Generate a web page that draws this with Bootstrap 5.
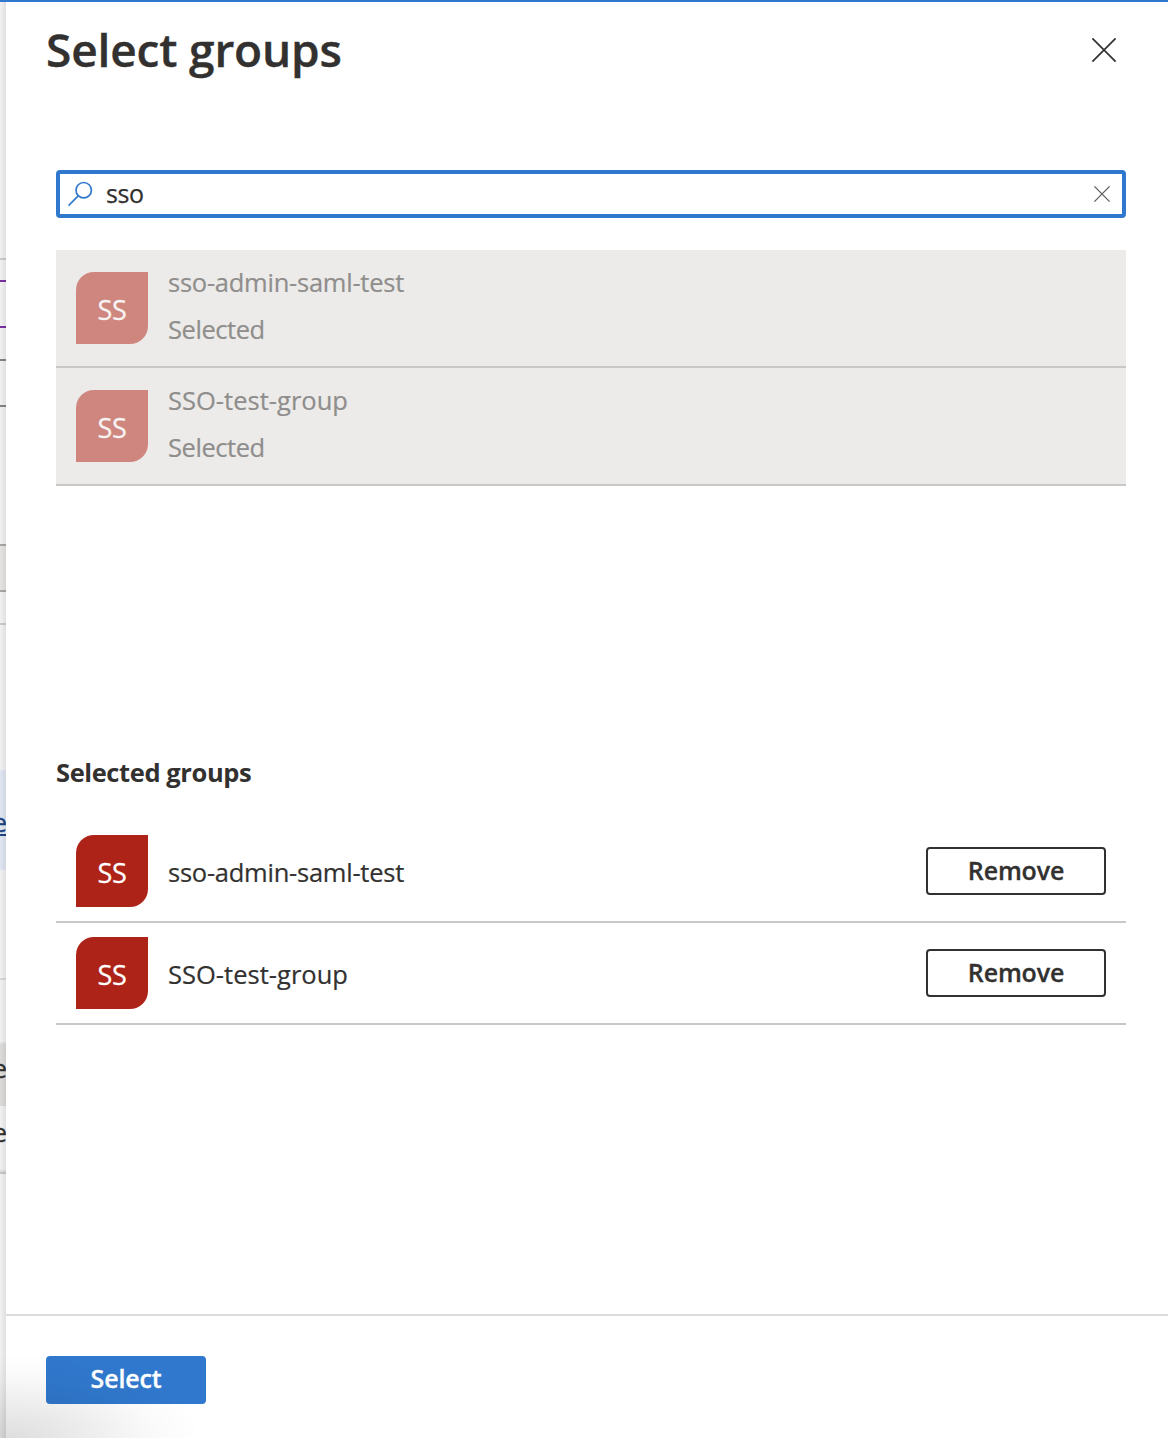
<!DOCTYPE html>
<html lang="en">
<head>
<meta charset="utf-8">
<meta name="viewport" content="width=device-width, initial-scale=1">
<title>Select groups</title>
<link href="https://cdn.jsdelivr.net/npm/bootstrap@5.3.0/dist/css/bootstrap.min.css" rel="stylesheet">
<style>
:root{--azure:#3078cd;--ink:#323130}
body{font-family:"Open Sans","Noto Sans",sans-serif;font-size:26px;line-height:36px;color:var(--ink);background:#fff}
.screen{height:1438px;border-top:2px solid var(--azure)}
.behind{width:6px;background:#f1f1f1;font-size:26px}
.behind>div{flex:none;display:flex;justify-content:flex-end;width:6px;overflow:hidden}
.behind span{flex:none;margin-right:-1px;-webkit-text-stroke:.3px}
.shade{left:0;top:0;width:6px;height:100%;background:linear-gradient(90deg,rgba(0,0,0,0),rgba(0,0,0,.07))}
.blade{min-width:0}
.blade-head{height:168px;padding:23px 50px 0 40px}
.blade-title{font-size:46px;line-height:48px;font-weight:600;letter-spacing:-.15px;-webkit-text-stroke:.4px}
.blade-body{padding:0 42px 0 50px;height:1144px}
.search-box{height:48px;border:4px solid var(--azure);border-radius:4px;padding:0 11px 0 8px}
.search-box input{font-size:25px;letter-spacing:-.4px;-webkit-text-stroke:.25px;color:var(--ink);padding:0 0 2px 13px;height:40px;line-height:38px}
.search-box input:focus{box-shadow:none}
.found{margin-top:32px;height:236px}
.found-row{height:118px;background:#ecebe9;border-bottom:2px solid #c8c8c8;padding:9px 20px 0;color:#8f8e8c}
.found-text{line-height:47px}
.tile{width:72px;height:72px;border-radius:18px 0 18px 0;background:#ae2318;color:#fff;font-size:27px;padding-top:4px;letter-spacing:-.3px;-webkit-text-stroke:.3px}
.found .tile{background:#cf867e;color:#f6f3f2;margin-top:13px}
.label-text{margin-left:20px;font-size:25.5px;letter-spacing:-.25px;-webkit-text-stroke:.2px}
.name-caps{letter-spacing:.02px}
.name-status{letter-spacing:-.45px}
.picked-title{margin-top:268px;font-size:25.5px;line-height:36px;font-weight:700;letter-spacing:-.4px}
.picked{margin-top:31px}
.picked-row{height:102px;border-bottom:2px solid #c8c8c8;padding:0 20px}
.picked .label-text{padding-top:2px}
.btn-remove{width:180px;height:48px;border:2px solid var(--ink);border-radius:4px;font-size:25px;font-weight:600;line-height:38px;padding:0 0 3px;color:var(--ink);background:#fff;-webkit-text-stroke:.3px;letter-spacing:-.15px}
.blade-foot{border-top:2px solid #dcdcdc;height:124px;padding:40px}
.btn-select{width:160px;height:48px;border:0;border-radius:4px;background:var(--azure);color:#fff;font-size:25px;font-weight:600;line-height:43px;padding:0 0 4px;-webkit-text-stroke:.3px;letter-spacing:-.15px}
.glow{left:0;bottom:0;width:220px;height:90px;pointer-events:none;background:radial-gradient(ellipse 190px 84px at 12px 100%,rgba(0,0,0,.13),rgba(0,0,0,.08) 35%,rgba(0,0,0,.02) 75%,rgba(0,0,0,0))}
</style>
</head>
<body class="overflow-hidden">
<div class="screen d-flex position-relative">
  <aside class="behind d-flex flex-column flex-shrink-0 overflow-hidden position-relative">
    <div style="height:256px"></div>
    <div style="height:2px;background:#cbcbcb"></div>
    <div style="height:20px"></div>
    <div style="height:2px;background:#7c30a0"></div>
    <div style="height:44px"></div>
    <div style="height:2px;background:#7c30a0"></div>
    <div style="height:31px"></div>
    <div style="height:2px;background:#838383"></div>
    <div style="height:44px"></div>
    <div style="height:2px;background:#838383"></div>
    <div style="height:137px"></div>
    <div style="height:2px;background:#a8a7a5"></div>
    <div style="height:44px;background:#e5e4e2"></div>
    <div style="height:2px;background:#a8a7a5"></div>
    <div style="height:31px"></div>
    <div style="height:2px;background:#cbcbcb"></div>
    <div style="height:145px"></div>
    <div style="height:100px;background:#e0e6f1;color:#1b4482;padding-top:34px"><span class="text-decoration-underline">e</span></div>
    <div style="height:108px"></div>
    <div style="height:2px;background:#d8d8d8"></div>
    <div style="height:62px"></div>
    <div style="height:2px;background:#e4e4e4"></div>
    <div style="height:62px;background:#dcdbd9;padding-top:6px"><span>e</span></div>
    <div style="height:64px;padding-top:8px"><span>e</span></div>
    <div style="height:2px;background:#e0e0e0"></div>
    <div style="height:2px;background:#c6c6c6"></div>
    <i class="shade position-absolute"></i>
  </aside>
  <main class="blade flex-grow-1 d-flex flex-column bg-white">
    <header class="blade-head d-flex justify-content-between">
      <h1 class="blade-title mb-0">Select groups</h1>
      <button type="button" class="btn p-0 border-0 d-flex align-self-start mt-2" aria-label="Close">
        <svg width="28" height="34" viewBox="0 0 28 34" fill="none" stroke="#323130" stroke-width="1.7"><path d="M2.4 5.4 25.6 28.6M25.6 5.4 2.4 28.6"/></svg>
      </button>
    </header>
    <section class="blade-body">
      <div class="search-box d-flex align-items-center">
        <svg class="flex-shrink-0" width="25" height="26" viewBox="0 0 25 26" fill="none" stroke="#3078cd" stroke-width="1.7"><circle cx="15.7" cy="9.2" r="7.7"/><path d="M10.2 14.8.5 24.6"/></svg>
        <input class="form-control border-0 bg-transparent rounded-0" type="text" value="sso" aria-label="Search">
        <svg class="flex-shrink-0" width="18" height="18" viewBox="0 0 18 18" fill="none" stroke="#605e5c" stroke-width="1.3"><path d="M1.4 1.4 16.6 16.6M16.6 1.4 1.4 16.6"/></svg>
      </div>
      <div class="found">
        <div class="found-row d-flex align-items-start">
          <div class="tile d-flex align-items-center justify-content-center">SS</div>
          <div class="label-text found-text"><div>sso-admin-saml-test</div><div class="name-status">Selected</div></div>
        </div>
        <div class="found-row d-flex align-items-start">
          <div class="tile d-flex align-items-center justify-content-center">SS</div>
          <div class="label-text found-text"><div class="name-caps">SSO-test-group</div><div class="name-status">Selected</div></div>
        </div>
      </div>
      <h2 class="picked-title mb-0">Selected groups</h2>
      <div class="picked">
        <div class="picked-row d-flex align-items-center">
          <div class="tile d-flex align-items-center justify-content-center">SS</div>
          <div class="label-text">sso-admin-saml-test</div>
          <button type="button" class="btn btn-remove ms-auto">Remove</button>
        </div>
        <div class="picked-row d-flex align-items-center">
          <div class="tile d-flex align-items-center justify-content-center">SS</div>
          <div class="label-text name-caps">SSO-test-group</div>
          <button type="button" class="btn btn-remove ms-auto">Remove</button>
        </div>
      </div>
    </section>
    <footer class="blade-foot"><button type="button" class="btn btn-select d-block">Select</button></footer>
  </main>
  <div class="glow position-absolute"></div>
</div>
<script src="https://cdn.jsdelivr.net/npm/bootstrap@5.3.0/dist/js/bootstrap.bundle.min.js"></script>
</body>
</html>
